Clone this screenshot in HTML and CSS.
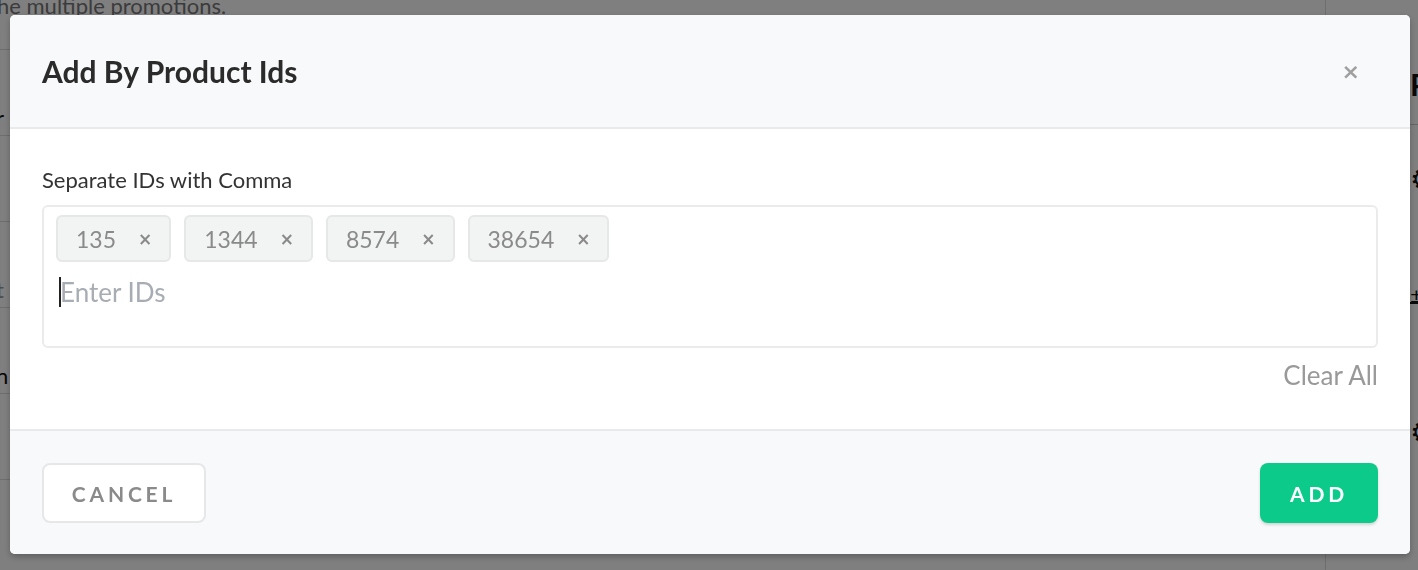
FILE: index.html
```html
<!DOCTYPE html>
<html lang="en">
<head>
  <meta charset="UTF-8">
  <meta name="viewport" content="width=device-width, initial-scale=1.0">
  <title>Add By Product Ids</title>
  <link rel="stylesheet" href="styles.css">
</head>
<body>
  <!-- page behind the modal -->
  <div class="page">
    <div class="page-main">
      <p class="page-note">he multiple promotions.</p>
      <div class="page-row"></div>
      <div class="page-row"><span class="page-word">r</span></div>
      <div class="page-row"></div>
      <div class="page-row"><span class="page-word light">t</span></div>
      <div class="page-row"><span class="page-word">n</span></div>
      <div class="page-row"></div>
    </div>
    <div class="page-side">
      <h2 class="side-title">P</h2>
      <div class="side-line"></div>
      <div class="side-icon">&#9881;</div>
      <div class="side-sign">&plusmn;</div>
      <div class="side-icon low">&#9881;</div>
    </div>
  </div>

  <div class="backdrop"></div>

  <div class="modal">
    <div class="modal-header">
      <h1 class="modal-title">Add By Product Ids</h1>
      <button class="close">&times;</button>
    </div>

    <div class="modal-body">
      <label class="field-label">Separate IDs with Comma</label>
      <div class="tag-box">
        <div class="tags">
          <span class="tag">135 <b class="tag-x">&times;</b></span>
          <span class="tag">1344 <b class="tag-x">&times;</b></span>
          <span class="tag">8574 <b class="tag-x">&times;</b></span>
          <span class="tag">38654 <b class="tag-x">&times;</b></span>
        </div>
        <div class="tag-input"><span class="caret"></span>Enter IDs</div>
      </div>
      <div class="clear-row"><a class="clear-all">Clear All</a></div>
    </div>

    <div class="modal-footer">
      <button class="btn btn-cancel">CANCEL</button>
      <button class="btn btn-add">ADD</button>
    </div>
  </div>
</body>
</html>
```

FILE: styles.css
```css
* {
  box-sizing: border-box;
}

body {
  margin: 0;
  width: 1418px;
  height: 570px;
  overflow: hidden;
  font-family: Lato, "Open Sans", sans-serif;
  background: #fff;
}

/* background page */
.page {
  display: flex;
  height: 570px;
}

.page-main {
  flex: 1;
}

.page-note {
  margin: -8px 0 0 -3px;
  font-size: 22px;
  line-height: 28px;
  color: #777;
}

.page-row {
  height: 86px;
  border-bottom: 1px solid #ddd;
  font-size: 22px;
  display: flex;
  align-items: flex-end;
}

.page-row:first-of-type {
  height: 30px;
}

.page-word {
  color: #111;
  margin-left: -4px;
  padding-bottom: 4px;
}

.page-word.light {
  color: #999;
}

.page-side {
  width: 93px;
  border-left: 1px solid #ddd;
  padding-left: 84px;
  overflow: hidden;
}

.side-title {
  margin: 66px 0 0;
  font-size: 30px;
  color: #111;
}

.side-line {
  border-top: 1px solid #ccc;
  margin: 22px 0 0 -84px;
  width: 93px;
}

.side-icon {
  font-size: 28px;
  margin-top: 36px;
  color: #111;
}

.side-icon.low {
  margin-top: 110px;
}

.side-sign {
  font-size: 22px;
  margin-top: 92px;
  color: #111;
  border-bottom: 2px solid #111;
  line-height: 14px;
}

.backdrop {
  position: fixed;
  inset: 0;
  background: rgba(0, 0, 0, 0.5);
}

/* modal */
.modal {
  position: fixed;
  top: 15px;
  left: 10px;
  width: 1400px;
  height: 539px;
  background: #fff;
  border-radius: 5px;
  box-shadow: 0 3px 6px rgba(0, 0, 0, 0.25);
  display: flex;
  flex-direction: column;
  overflow: hidden;
}

.modal-header {
  height: 114px;
  background: #f8f9fa;
  border-bottom: 2px solid #e9eaec;
  padding: 0 32px;
  display: flex;
  align-items: center;
  justify-content: space-between;
}

.modal-title {
  margin: 0 0 1px;
  font-size: 30px;
  font-weight: 700;
  color: #2b2b2b;
}

.close {
  border: 0;
  background: none;
  font-family: "DejaVu Sans", sans-serif;
  font-size: 22px;
  font-weight: 700;
  color: #a0a0a0;
  padding: 0;
  margin-right: 18px;
}

.modal-body {
  height: 302px;
  padding: 37px 32px 0;
  border-bottom: 2px solid #e9eaec;
}

.field-label {
  display: block;
  font-size: 22px;
  line-height: 28px;
  color: #333;
  margin-bottom: 11px;
}

.tag-box {
  height: 143px;
  border: 2px solid #ebebeb;
  border-radius: 6px;
  padding: 8px 12px;
}

.tags {
  display: flex;
  gap: 13px;
}

.tag {
  display: inline-flex;
  align-items: center;
  height: 47px;
  padding: 0 17px 0 18px;
  background: #f2f3f3;
  border: 2px solid #e6e7e7;
  border-radius: 6px;
  font-size: 23px;
  color: #8a8a8a;
}

.tag-x {
  font-family: "DejaVu Sans", sans-serif;
  font-size: 17px;
  font-weight: 700;
  color: #8a8a8a;
  margin-left: 22px;
}

.tag-input {
  position: relative;
  margin-top: 13px;
  padding-left: 4px;
  font-size: 26px;
  line-height: 34px;
  color: #a8adb4;
}

.caret {
  position: absolute;
  left: 3px;
  top: 2px;
  width: 2px;
  height: 30px;
  background: #222;
}

.clear-row {
  display: flex;
  justify-content: flex-end;
  margin-top: 11px;
}

.clear-all {
  font-size: 26px;
  line-height: 32px;
  color: #999;
}

.modal-footer {
  flex: 1;
  background: #f8f9fa;
  padding: 32px 32px 0;
  display: flex;
  justify-content: space-between;
  align-items: flex-start;
}

.btn {
  height: 60px;
  border-radius: 8px;
  font-family: Lato, sans-serif;
  font-size: 21px;
  font-weight: 700;
  letter-spacing: 3.8px;
  cursor: pointer;
}

.btn-cancel {
  width: 164px;
  background: #fff;
  border: 2px solid #e6e7e9;
  color: #8a8a8a;
}

.btn-add {
  width: 118px;
  background: #0ccb8a;
  border: 0;
  color: #fff;
  box-shadow: 0 2px 3px rgba(0, 0, 0, 0.15);
}
```
